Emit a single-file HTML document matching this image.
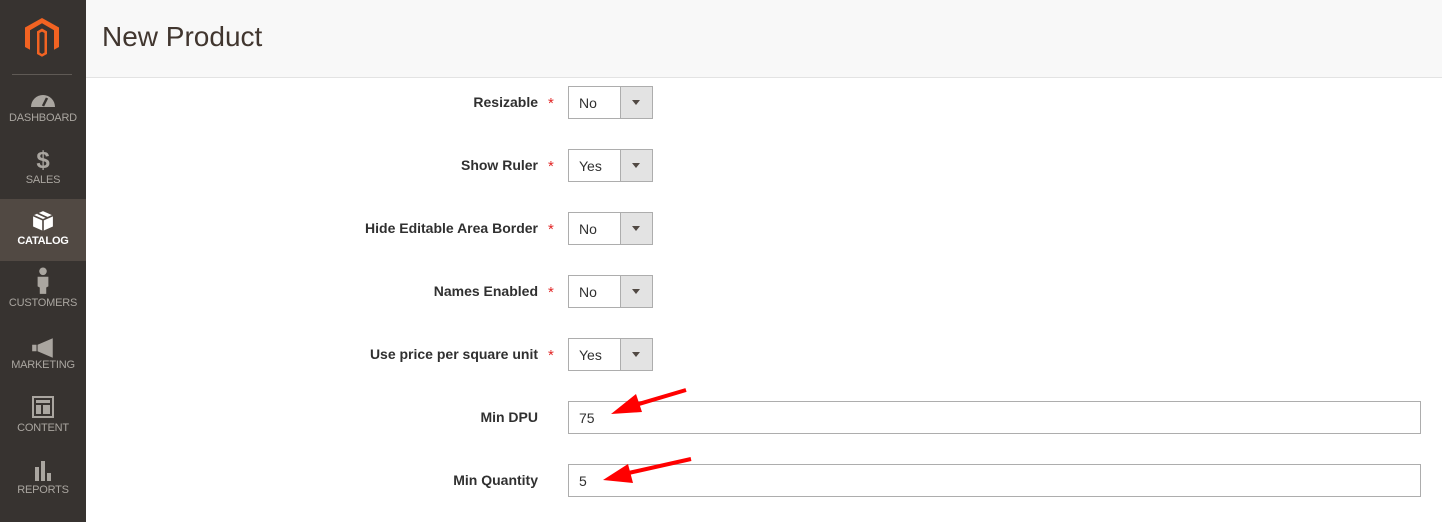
<!DOCTYPE html>
<html><head><style>
body{margin:0;width:1442px;height:522px;overflow:hidden;background:#fff;font-family:"Liberation Sans",sans-serif;position:relative}
.side{position:absolute;left:0;top:0;width:86px;height:522px;background:#373330}
.logo{position:absolute;left:24px;top:16px}
.sep{position:absolute;left:12px;top:74px;width:60px;height:1px;background:#5f5a55}
.it{position:absolute;left:0;width:86px;height:62px;text-align:center;color:#aaa6a0;font-size:11px;letter-spacing:-0.2px}
.it.act{background:#514943;color:#fff;font-weight:bold}
.it svg{position:absolute;left:50%;transform:translateX(-50%)}
.it span{position:absolute;left:0;right:0}
.hdr{position:absolute;left:86px;top:0;right:0;height:77px;background:#f8f8f8;border-bottom:1px solid #e3e3e3}
.hdr h1{margin:0;position:absolute;left:16px;top:21px;font-weight:normal;font-size:28px;color:#41362f}
.lbl{position:absolute;right:904px;font-size:14px;font-weight:bold;color:#303030;width:400px;text-align:right}
.star{position:absolute;left:548px;color:#e22626;font-size:15px}
.sel{position:absolute;left:568px;width:83px;height:31px;border:1px solid #adadad;background:#fff;font-size:14px;color:#303030}
.sel b{font-weight:normal;position:absolute;left:10px;top:8px}
.sel i{position:absolute;left:51px;top:0;width:32px;height:31px;background:#e3e3e3;border-left:1px solid #adadad;box-sizing:border-box}
.sel i:after{content:"";position:absolute;left:11px;top:13px;border:4px solid transparent;border-top:5px solid #514943;border-bottom:0}
.inp{position:absolute;left:568px;width:851px;height:31px;border:1px solid #adadad;font-size:14px;color:#303030}
.inp b{font-weight:normal;position:absolute;left:10px;top:8px}
</style></head><body>
<div class="side">
<svg class="logo" width="36" height="42" viewBox="0 0 36 40"><path d="M18 1L1 10.5V30l5 2.8V13.2L18 6.3l12 6.9v19.6l5-2.8V10.5z M18 11.5l-5 2.9V37l5 2.8 5-2.8V14.4l-5-2.9zM15.5 16l2.5-1.4 2.5 1.4v19.5L18 37l-2.5-1.5z" fill="#f26322"/></svg>
<div class="sep"></div>
<div class="it" style="top:88px"><svg style="top:4px" width="26" height="16" viewBox="0 0 26 16"><path d="M1 15A12 12 0 0 1 25 15z" fill="#aaa6a0"/><path d="M13 14l4-8" stroke="#373330" stroke-width="2.5"/></svg><span style="top:24px">DASHBOARD</span></div>
<div class="it" style="top:150px"><div style="position:absolute;left:0;right:0;top:-3px;font-size:24px;font-weight:bold;color:#aaa6a0">$</div><span style="top:24px">SALES</span></div>
<div class="it act" style="top:199px;height:62px"><svg style="top:11px" width="22" height="22" viewBox="0 0 20 20"><path d="M10 1L19 5v10l-9 4-9-4V5z" fill="#fff"/><path d="M1 5l9 4 9-4M10 9v10M5 3l9 4" stroke="#514943" stroke-width="1.5" fill="none"/></svg><span style="top:36px">CATALOG</span></div>
<div class="it" style="top:266px"><svg style="top:1px" width="16" height="28" viewBox="0 0 14 26"><circle cx="7" cy="4" r="3.5" fill="#aaa6a0"/><path d="M2 9h10v9l-2 1v6H4v-6l-2-1z" fill="#aaa6a0"/></svg><span style="top:31px">CUSTOMERS</span></div>
<div class="it" style="top:334px"><svg style="top:3px" width="26" height="22" viewBox="0 0 24 20"><path d="M2 7h4v6H2zM7 7l14-6v18L7 13z" fill="#aaa6a0"/></svg><span style="top:25px">MARKETING</span></div>
<div class="it" style="top:395px"><svg style="top:1px" width="22" height="22" viewBox="0 0 22 22"><rect x="1" y="1" width="20" height="20" fill="none" stroke="#aaa6a0" stroke-width="2"/><rect x="4" y="4" width="14" height="3" fill="#aaa6a0"/><rect x="4" y="9" width="5" height="9" fill="#aaa6a0"/><rect x="11" y="9" width="7" height="9" fill="#aaa6a0"/></svg><span style="top:27px">CONTENT</span></div>
<div class="it" style="top:457px"><svg style="top:2px" width="22" height="22" viewBox="0 0 20 22"><rect x="2" y="8" width="4" height="14" fill="#aaa6a0"/><rect x="8" y="2" width="4" height="20" fill="#aaa6a0"/><rect x="14" y="14" width="4" height="8" fill="#aaa6a0"/></svg><span style="top:27px">REPORTS</span></div>
</div>
<div class="hdr"><h1>New Product</h1></div>

<div class="lbl" style="top:94px">Resizable</div><div class="star" style="top:95px">*</div>
<div class="sel" style="top:86px"><b>No</b><i></i></div>
<div class="lbl" style="top:157px">Show Ruler</div><div class="star" style="top:158px">*</div>
<div class="sel" style="top:149px"><b>Yes</b><i></i></div>
<div class="lbl" style="top:220px">Hide Editable Area Border</div><div class="star" style="top:221px">*</div>
<div class="sel" style="top:212px"><b>No</b><i></i></div>
<div class="lbl" style="top:283px">Names Enabled</div><div class="star" style="top:284px">*</div>
<div class="sel" style="top:275px"><b>No</b><i></i></div>
<div class="lbl" style="top:346px">Use price per square unit</div><div class="star" style="top:347px">*</div>
<div class="sel" style="top:338px"><b>Yes</b><i></i></div>
<div class="lbl" style="top:409px">Min DPU</div>
<div class="inp" style="top:401px"><b>75</b></div>
<div class="lbl" style="top:472px">Min Quantity</div>
<div class="inp" style="top:464px"><b>5</b></div>

<svg style="position:absolute;left:0;top:0" width="1442" height="522">
<path d="M686 390L632 406" stroke="#f00" stroke-width="4"/>
<path d="M611 414L636 394L642 412z" fill="#f00"/>
<path d="M691 459L624 474" stroke="#f00" stroke-width="4"/>
<path d="M603 480L628 464L633 483z" fill="#f00"/>
</svg>
</body></html>
